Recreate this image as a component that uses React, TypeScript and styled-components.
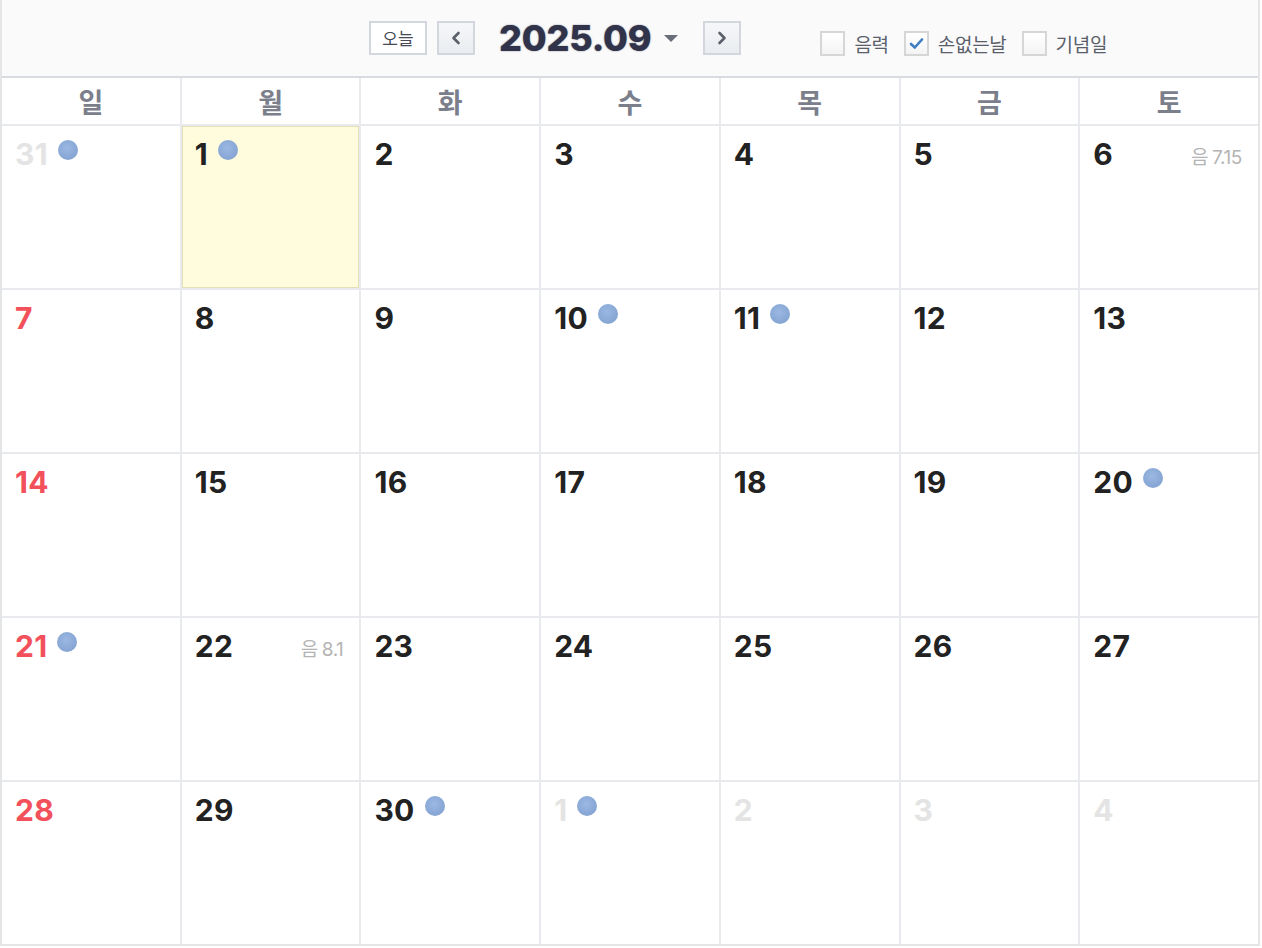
import React from "react";
import styled, { createGlobalStyle, css } from "styled-components";

const GlobalStyle = createGlobalStyle`
  html, body {
    margin: 0;
    padding: 0;
    background: #ffffff;
  }
  body {
    font-family: Inter, "Noto Sans CJK KR", sans-serif;
  }
`;

const Calendar = styled.div`
  width: 1256px;
  border-left: 2px solid #e4e5e7;
  border-right: 2px solid #e4e5e7;
  border-bottom: 2px solid #e4e5e7;
  background: #fff;
`;

const Toolbar = styled.div`
  height: 76px;
  display: flex;
  align-items: center;
  padding-left: 367px;
  background: #fafafa;
  border-bottom: 2px solid #d8dce1;
`;

const TodayButton = styled.button`
  width: 58px;
  height: 34px;
  margin: 0;
  padding: 0;
  border: 2px solid #d3d7dd;
  background: #fff;
  color: #454a54;
  font-family: "Noto Sans CJK KR", sans-serif;
  font-size: 17px;
  line-height: 30px;
  cursor: pointer;
`;

const NavButton = styled.button<{ $gap?: number }>`
  width: 38px;
  height: 34px;
  margin: 0 0 0 ${(p) => p.$gap ?? 0}px;
  padding: 0;
  border: 2px solid #d3d7dd;
  background: linear-gradient(#f6f7f9, #e9ecf0);
  display: flex;
  align-items: center;
  justify-content: center;
  cursor: pointer;
  svg {
    width: 12px;
    height: 14px;
  }
`;

const Title = styled.div`
  margin-left: 24px;
  font-family: Inter, sans-serif;
  font-weight: 800;
  font-size: 36px;
  letter-spacing: -0.2px;
  color: #30334a;
  text-shadow: 0 0 1.5px rgba(48, 51, 74, 0.7);
  line-height: 1;
`;

const Caret = styled.span`
  width: 0;
  height: 0;
  margin-left: 13px;
  margin-right: 25px;
  border-left: 7px solid transparent;
  border-right: 7px solid transparent;
  border-top: 7px solid #6a6e78;
`;

const Filters = styled.div`
  display: flex;
  align-items: center;
  margin-left: 79px;
  margin-top: 10px;
  gap: 15px;
`;

const FilterItem = styled.label`
  display: flex;
  align-items: center;
  gap: 9px;
  font-family: "Noto Sans CJK KR", sans-serif;
  font-size: 19px;
  letter-spacing: -0.3px;
  color: #59606b;
`;

const Box = styled.span`
  width: 21px;
  height: 21px;
  border: 2px solid #d6d6d6;
  background: linear-gradient(#ffffff, #f4f4f4);
  display: flex;
  align-items: center;
  justify-content: center;
  svg {
    width: 15px;
    height: 13px;
  }
`;

const Grid = styled.div`
  display: grid;
  grid-template-columns: repeat(7, 1fr);
  gap: 2px;
  background: #e8eaee;
`;

const DayName = styled.div`
  height: 46px;
  background: #fff;
  display: flex;
  align-items: center;
  justify-content: center;
  font-family: "Noto Sans CJK KR", sans-serif;
  font-weight: 700;
  font-size: 27px;
  color: #7b7e8b;
`;

const Cell = styled.div<{ $today?: boolean }>`
  height: 162px;
  box-sizing: border-box;
  padding: 14px 16px 0 13px;
  background: #fff;
  display: flex;
  align-items: flex-start;
  ${(p) =>
    p.$today &&
    css`
      background: #fffcde;
      box-shadow: inset 0 0 0 1px #e3dfb6;
    `}
`;

const Num = styled.span<{ $tone: "normal" | "sun" | "other" }>`
  font-family: Inter, sans-serif;
  font-weight: 700;
  font-size: 30px;
  line-height: 32px;
  margin-top: -2px;
  letter-spacing: 0.3px;
  color: ${(p) =>
    p.$tone === "sun" ? "#f2505a" : p.$tone === "other" ? "#e4e4e4" : "#222222"};
`;

const Dot = styled.span`
  width: 20px;
  height: 20px;
  margin-left: 10px;
  border-radius: 50%;
  background: radial-gradient(circle at 45% 40%, #9ab8e2, #7e9dcd);
`;

const Lunar = styled.span`
  margin-left: auto;
  margin-top: 2px;
  font-family: Inter, "Noto Sans CJK KR", sans-serif;
  font-size: 19px;
  color: #b4b4b4;
  letter-spacing: -0.4px;
  span {
    font-family: "Noto Sans CJK KR", sans-serif;
    margin-right: 4px;
  }
`;

type Day = {
  n: number;
  other?: boolean;
  dot?: boolean;
  today?: boolean;
  lunar?: string;
};

const weeks: Day[][] = [
  [
    { n: 31, other: true, dot: true },
    { n: 1, today: true, dot: true },
    { n: 2 },
    { n: 3 },
    { n: 4 },
    { n: 5 },
    { n: 6, lunar: "7.15" },
  ],
  [{ n: 7 }, { n: 8 }, { n: 9 }, { n: 10, dot: true }, { n: 11, dot: true }, { n: 12 }, { n: 13 }],
  [{ n: 14 }, { n: 15 }, { n: 16 }, { n: 17 }, { n: 18 }, { n: 19 }, { n: 20, dot: true }],
  [
    { n: 21, dot: true },
    { n: 22, lunar: "8.1" },
    { n: 23 },
    { n: 24 },
    { n: 25 },
    { n: 26 },
    { n: 27 },
  ],
  [
    { n: 28 },
    { n: 29 },
    { n: 30, dot: true },
    { n: 1, other: true, dot: true },
    { n: 2, other: true },
    { n: 3, other: true },
    { n: 4, other: true },
  ],
];

const dayNames = ["일", "월", "화", "수", "목", "금", "토"];

const Chevron = ({ dir }: { dir: "left" | "right" }) => (
  <svg viewBox="0 0 12 14">
    <path
      d={dir === "left" ? "M8.5 2 L3.5 7 L8.5 12" : "M3.5 2 L8.5 7 L3.5 12"}
      fill="none"
      stroke="#5b606b"
      strokeWidth="2.6"
      strokeLinecap="round"
      strokeLinejoin="round"
    />
  </svg>
);

const Check = () => (
  <svg viewBox="0 0 15 13">
    <path
      d="M2 7 L5.8 10.5 L13 2.5"
      fill="none"
      stroke="#3f7cc2"
      strokeWidth="2.6"
      strokeLinecap="round"
      strokeLinejoin="round"
    />
  </svg>
);

export default function App() {
  return (
    <>
      <GlobalStyle />
      <Calendar>
        <Toolbar>
          <TodayButton>오늘</TodayButton>
          <NavButton $gap={10}>
            <Chevron dir="left" />
          </NavButton>
          <Title>2025.09</Title>
          <Caret />
          <NavButton>
            <Chevron dir="right" />
          </NavButton>
          <Filters>
            <FilterItem>
              <Box />
              음력
            </FilterItem>
            <FilterItem>
              <Box>
                <Check />
              </Box>
              손없는날
            </FilterItem>
            <FilterItem>
              <Box />
              기념일
            </FilterItem>
          </Filters>
        </Toolbar>
        <Grid>
          {dayNames.map((d) => (
            <DayName key={d}>{d}</DayName>
          ))}
          {weeks.map((week, wi) =>
            week.map((day, di) => (
              <Cell key={`${wi}-${di}`} $today={day.today}>
                <Num $tone={day.other ? "other" : di === 0 ? "sun" : "normal"}>{day.n}</Num>
                {day.dot && <Dot />}
                {day.lunar && (
                  <Lunar>
                    <span>음</span>
                    {day.lunar}
                  </Lunar>
                )}
              </Cell>
            ))
          )}
        </Grid>
      </Calendar>
    </>
  );
}
